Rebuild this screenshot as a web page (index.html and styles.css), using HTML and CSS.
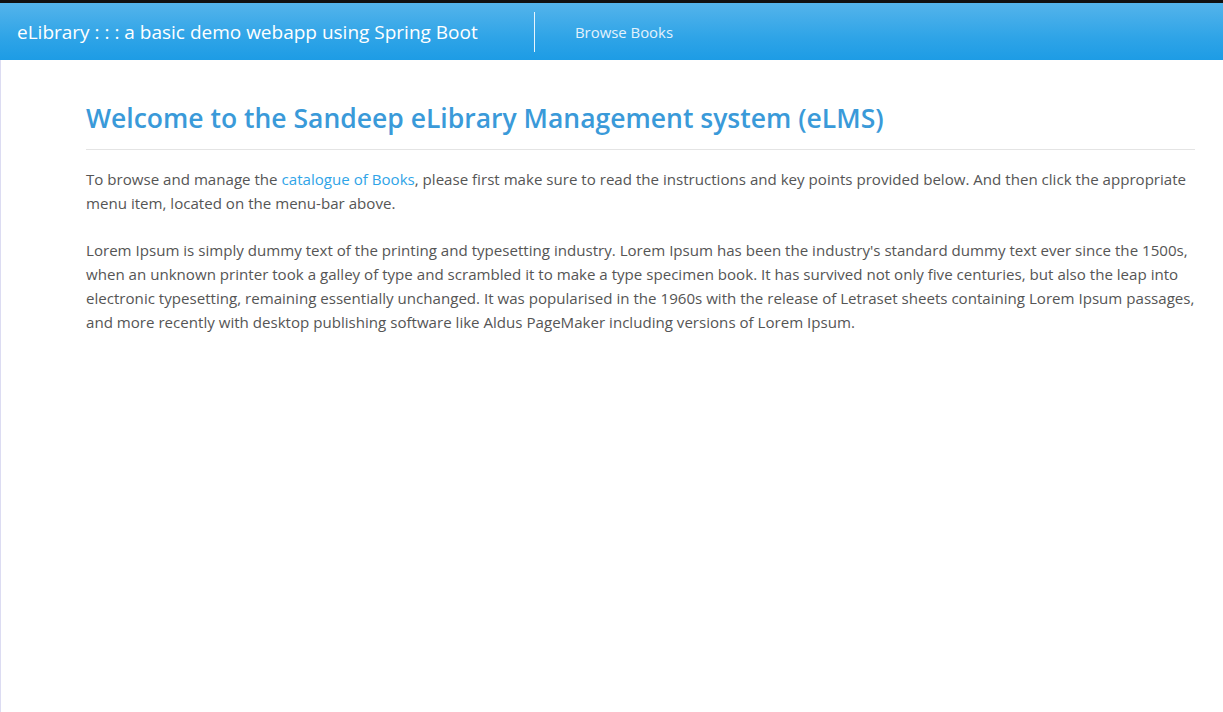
FILE: index.html
```html
<!DOCTYPE html>
<html lang="en">
<head>
<meta charset="utf-8">
<title>eLibrary</title>
<link rel="stylesheet" href="styles.css">
</head>
<body>
<header class="navbar">
  <a class="brand" href="#">eLibrary : : : a basic demo webapp using Spring Boot</a>
  <span class="divider"></span>
  <nav class="menu"><a href="#">Browse Books</a></nav>
</header>
<main class="content">
  <h1 class="title">Welcome to the Sandeep eLibrary Management system (eLMS)</h1>
  <hr class="rule">
  <p class="para">To browse and manage the <a class="link" href="#">catalogue of Books</a>, please first make sure to read the instructions and key points provided below. And then click the appropriate menu item, located on the menu-bar above.</p>
  <p class="para">Lorem Ipsum is simply dummy text of the printing and typesetting industry. Lorem Ipsum has been the industry's standard dummy text ever since the 1500s, when an unknown printer took a galley of type and scrambled it to make a type specimen book. It has survived not only five centuries, but also the leap into electronic typesetting, remaining essentially unchanged. It was popularised in the 1960s with the release of Letraset sheets containing Lorem Ipsum passages, and more recently with desktop publishing software like Aldus PageMaker including versions of Lorem Ipsum.</p>
</main>
</body>
</html>
```
FILE: styles.css
```css
html, body {
  margin: 0;
  padding: 0;
  height: 100%;
}
body {
  font-family: "Open Sans", Lato, sans-serif;
  color: #555555;
  background: #ffffff;
  display: flex;
  flex-direction: column;
}
.navbar {
  height: 57px;
  border-top: 3px solid #111;
  background: linear-gradient(#54b4eb, #2fa4e7 60%, #1d9ce5);
  display: flex;
  align-items: center;
  flex-shrink: 0;
}
.brand {
  color: #ffffff;
  text-decoration: none;
  font-size: 19px;
  padding-left: 17px;
  width: 500px;
}
.divider {
  width: 1px;
  height: 40px;
  background: #e8f5fd;
  margin-left: 17px;
}
.menu {
  padding-left: 40px;
}
.menu a {
  color: #e3f2fc;
  text-decoration: none;
  font-size: 14.9px;
}
.content {
  flex: 1;
  border-left: 1px solid #dcdcf2;
  padding: 0 28px 0 85px;
}
.title {
  margin: 40px 0 0;
  font-size: 26.5px;
  font-weight: 600;
  color: #3a9ad9;
  line-height: 36px;
}
.rule {
  border: 0;
  border-top: 1px solid #e4e4e4;
  margin: 13px 0 17px;
}
.para {
  margin: 0 -5px 22px 0;
  font-size: 15.1px;
  line-height: 24.3px;
}
.link {
  color: #2fa4e7;
  text-decoration: none;
}
```
